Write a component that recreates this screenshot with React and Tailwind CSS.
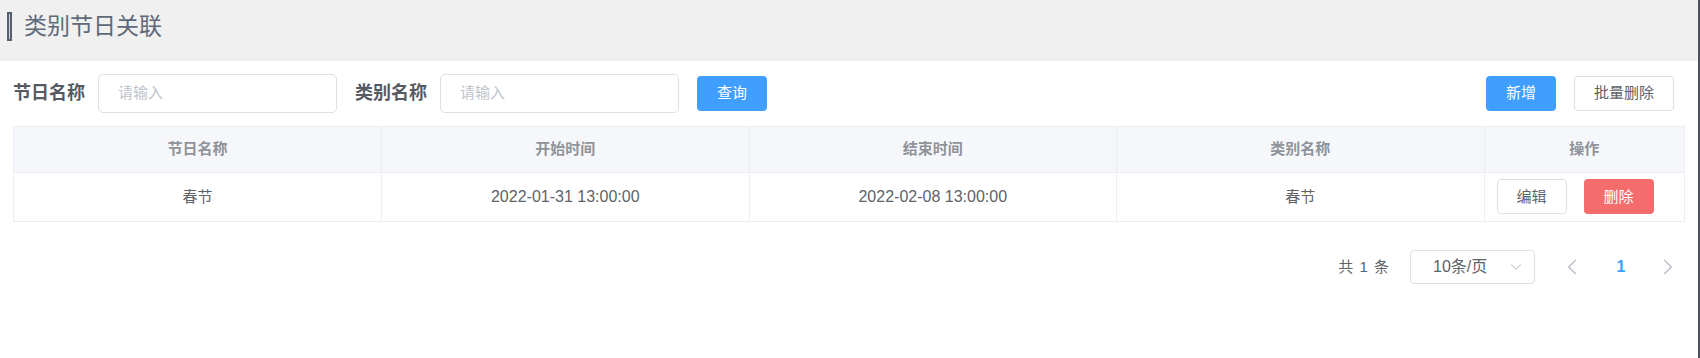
import { ChevronDown, ChevronLeft, ChevronRight } from 'lucide-react';

const FONT = { fontFamily: '"Liberation Sans", "Noto Sans CJK SC", sans-serif' };

const ROWS = [
  { name: '春节', start: '2022-01-31 13:00:00', end: '2022-02-08 13:00:00', category: '春节' },
];

function TextInput() {
  return (
    <div className="w-[239px] h-[39px] border border-[#dcdfe6] rounded-[5px] bg-white flex items-center pl-[19px] text-[15px] text-[#c0c4cc]">
      请输入
    </div>
  );
}

export default function App() {
  return (
    <div className="w-full h-[358px] bg-white border-r-2 border-[#4b5260] flex flex-col" style={FONT}>
      {/* Title bar */}
      <div className="h-[61px] bg-[#f0f0f0] flex items-start pt-[12px] pl-[7px] shrink-0">
        <span className="w-[5px] h-[29px] border-2 border-[#56606e] bg-[#cdd2d9]" />
        <span className="ml-[12px] h-[29px] text-[23px] text-[#5e6979] leading-[29px]">类别节日关联</span>
      </div>

      {/* Filters */}
      <div className="flex items-center h-[39px] mt-[13px] pl-[13px] pr-[24px]">
        <span className="text-[18px] font-bold text-[#555a63]">节日名称</span>
        <div className="ml-[13px]"><TextInput /></div>
        <span className="ml-[18px] text-[18px] font-bold text-[#555a63]">类别名称</span>
        <div className="ml-[13px]"><TextInput /></div>
        <button className="ml-[18px] w-[70px] h-[35px] rounded-[4px] bg-[#409eff] text-white text-[15px]">查询</button>
        <div className="flex-1" />
        <button className="w-[70px] h-[35px] rounded-[4px] bg-[#409eff] text-white text-[15px]">新增</button>
        <button className="ml-[18px] w-[100px] h-[35px] rounded-[4px] bg-white border border-[#dcdfe6] text-[#606266] text-[15px]">批量删除</button>
      </div>

      {/* Table */}
      <div className="mx-[13px] mt-[13px] border border-[#ebeef5]">
        <table className="w-full table-fixed border-collapse text-[15px]">
          <colgroup>
            <col />
            <col />
            <col />
            <col />
            <col className="w-[200px]" />
          </colgroup>
          <thead>
            <tr className="h-[45px] bg-[#f5f7fa] text-[#909399]">
              <th className="font-bold border-r border-b border-[#ebeef5]">节日名称</th>
              <th className="font-bold border-r border-b border-[#ebeef5]">开始时间</th>
              <th className="font-bold border-r border-b border-[#ebeef5]">结束时间</th>
              <th className="font-bold border-r border-b border-[#ebeef5]">类别名称</th>
              <th className="font-bold border-b border-[#ebeef5]">操作</th>
            </tr>
          </thead>
          <tbody>
            {ROWS.map((r, i) => (
              <tr key={i} className="h-[49px] text-[#606266] text-center">
                <td className="border-r border-[#ebeef5]">{r.name}</td>
                <td className="border-r border-[#ebeef5] text-[16px]">{r.start}</td>
                <td className="border-r border-[#ebeef5] text-[16px]">{r.end}</td>
                <td className="border-r border-[#ebeef5]">{r.category}</td>
                <td>
                  <div className="flex items-center pl-[12px] gap-[17px]">
                    <button className="w-[70px] h-[35px] rounded-[4px] border border-[#dcdfe6] bg-white text-[#606266] text-[15px]">编辑</button>
                    <button className="w-[70px] h-[35px] rounded-[4px] bg-[#f56c6c] text-white text-[15px]">删除</button>
                  </div>
                </td>
              </tr>
            ))}
          </tbody>
        </table>
      </div>

      {/* Pagination */}
      <div className="flex items-center justify-end mt-[28px] pr-[17px] h-[34px]">
        <span className="text-[15px] text-[#606266] tracking-[1px]">共 1 条</span>
        <div className="ml-[20px] w-[125px] h-[34px] border border-[#dcdfe6] rounded-[4px] flex items-center pl-[22px] pr-[9px] text-[15px] text-[#606266]">
          <span className="flex-1 text-[16px]">10条/页</span>
          <ChevronDown size={18} strokeWidth={1.4} className="text-[#c0c4cc]" />
        </div>
        <div className="ml-[24px] w-[26px] flex justify-center">
          <ChevronLeft size={26} strokeWidth={1.6} className="text-[#c0c4cc]" />
        </div>
        <span className="ml-[23px] w-[26px] text-center text-[16px] font-bold text-[#409eff]">1</span>
        <div className="ml-[21px] w-[26px] flex justify-center">
          <ChevronRight size={26} strokeWidth={1.6} className="text-[#c0c4cc]" />
        </div>
      </div>
    </div>
  );
}
